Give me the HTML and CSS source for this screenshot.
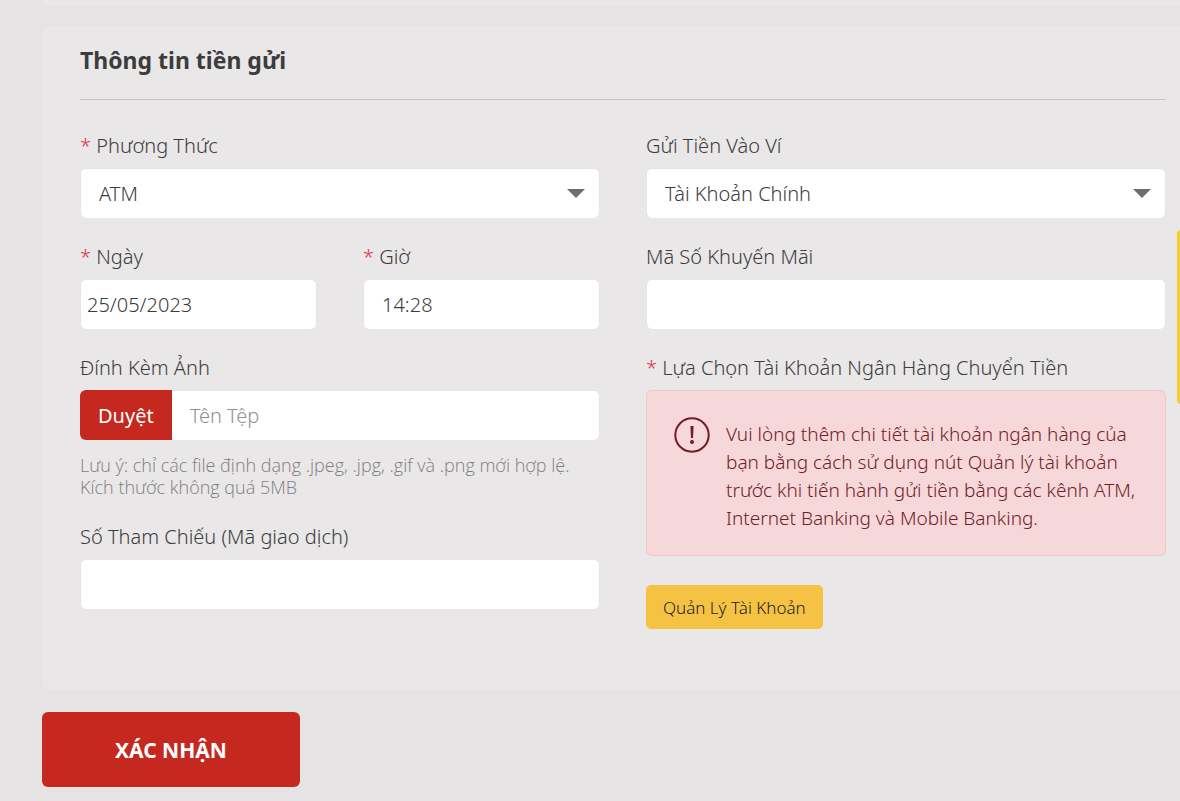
FILE: index.html
```html
<!DOCTYPE html>
<html lang="vi">
<head>
<meta charset="utf-8">
<meta name="viewport" content="width=device-width, initial-scale=1">
<title>Thông tin tiền gửi</title>
<link rel="stylesheet" href="styles.css">
</head>
<body>
<main class="page">
  <div class="card card-previous"></div>
  <form class="deposit">
    <section class="card card-deposit">
      <h2 class="card-title">Thông tin tiền gửi</h2>
      <div class="columns">
        <div class="column">
          <div class="field">
            <label class="label" for="method"><span class="required">*</span> Phương Thức</label>
            <div class="select-box">
              <select class="control" id="method"><option>ATM</option></select>
              <svg class="caret" viewBox="0 0 18 9" aria-hidden="true"><path d="M0 0H18L9 9Z"/></svg>
            </div>
          </div>
          <div class="pair">
            <div class="field">
              <label class="label" for="date"><span class="required">*</span> Ngày</label>
              <input class="control control-date" id="date" type="text" value="25/05/2023">
            </div>
            <div class="field">
              <label class="label" for="time"><span class="required">*</span> Giờ</label>
              <input class="control" id="time" type="text" value="14:28">
            </div>
          </div>
          <div class="field">
            <label class="label" for="file">Đính Kèm Ảnh</label>
            <div class="file-row">
              <button class="browse" type="button">Duyệt</button>
              <input class="control control-file" id="file" type="text" placeholder="Tên Tệp">
            </div>
            <p class="note">Lưu ý: chỉ các file định dạng .jpeg, .jpg, .gif và .png mới hợp lệ.<br>Kích thước không quá 5MB</p>
          </div>
          <div class="field">
            <label class="label" for="reference">Số Tham Chiếu (Mã giao dịch)</label>
            <input class="control" id="reference" type="text">
          </div>
        </div>
        <div class="column">
          <div class="field">
            <label class="label" for="wallet">Gửi Tiền Vào Ví</label>
            <div class="select-box">
              <select class="control" id="wallet"><option>Tài Khoản Chính</option></select>
              <svg class="caret" viewBox="0 0 18 9" aria-hidden="true"><path d="M0 0H18L9 9Z"/></svg>
            </div>
          </div>
          <div class="field">
            <label class="label" for="promo">Mã Số Khuyến Mãi</label>
            <input class="control" id="promo" type="text">
          </div>
          <div class="field">
            <div class="label"><span class="required">*</span> Lựa Chọn Tài Khoản Ngân Hàng Chuyển Tiền</div>
            <div class="alert" role="alert">
              <svg class="alert-icon" viewBox="0 0 36 36" aria-hidden="true">
                <circle cx="18" cy="18" r="16.7"/>
                <path d="M16.4 9H19.6L19 21H17Z"/>
                <circle class="dot" cx="18" cy="25" r="2"/>
              </svg>
              <p class="alert-text">Vui lòng thêm chi tiết tài khoản ngân hàng của bạn bằng cách sử dụng nút Quản lý tài khoản trước khi tiến hành gửi tiền bằng các kênh ATM, Internet Banking và Mobile Banking.</p>
            </div>
            <button class="manage" type="button">Quản Lý Tài Khoản</button>
          </div>
        </div>
      </div>
    </section>
    <button class="submit" type="submit">XÁC NHẬN</button>
  </form>
  <div class="side-tab"></div>
</main>
</body>
</html>
```
FILE: styles.css
```css
* { box-sizing: border-box; }

body {
  margin: 0;
  background: #e5e3e4;
  color: #3c3c3c;
  font-family: "Noto Sans", "Open Sans", sans-serif;
  font-size: 20px;
  font-weight: 300;
}

.page {
  position: relative;
  padding-left: 42px;
  overflow: hidden;
}

.card {
  background: #e9e7e8;
  border-radius: 6px 0 0 6px;
}

.card-previous {
  height: 5px;
  margin-bottom: 22px;
  border-radius: 0 0 0 6px;
}

.card-deposit {
  padding: 15px 14px 60px 38px;
  margin-bottom: 23px;
}

.card-title {
  margin: 0 0 31px;
  padding-bottom: 21px;
  border-bottom: 1px solid #c6c4c5;
  color: #3c3c3c;
  font-size: 23px;
  font-weight: 700;
  line-height: 36px;
}

.columns {
  display: grid;
  grid-template-columns: repeat(2, minmax(0, 1fr));
  gap: 46px;
}

.column {
  display: flex;
  flex-direction: column;
  gap: 24px;
}

.pair {
  display: grid;
  grid-template-columns: repeat(2, minmax(0, 1fr));
  gap: 46px;
}

.field {
  display: flex;
  flex-direction: column;
}

.label {
  margin-bottom: 7px;
  line-height: 30px;
}

.required { color: #dc3550; }

.control {
  width: 100%;
  height: 50px;
  padding: 0 18px;
  border: 1px solid #e6e4e5;
  border-bottom: 0;
  border-radius: 6px;
  background: #fff;
  color: #3c3c3c;
  font: inherit;
  appearance: none;
}

.control-date { padding: 0 6px; }

.control::placeholder { color: #909090; opacity: 1; }

.select-box {
  display: grid;
  align-items: center;
}

.select-box > * { grid-area: 1 / 1; }

.caret {
  width: 18px;
  height: 9px;
  margin-right: 15px;
  justify-self: end;
  fill: #6e6e6e;
  pointer-events: none;
}

.file-row { display: flex; }

.browse {
  padding: 0 18px;
  border: 0;
  border-radius: 6px 0 0 6px;
  background: #c4281e;
  color: #fff;
  font: inherit;
  font-weight: 400;
}

.control-file {
  flex: 1;
  min-width: 0;
  border-left: 0;
  border-radius: 0 6px 6px 0;
}

.note {
  margin: 14px 0 0;
  color: #807e7f;
  font-family: "Open Sans", "Noto Sans", sans-serif;
  font-size: 18px;
  line-height: 22px;
}

.alert {
  display: flex;
  gap: 16px;
  padding: 26px 24px 23px 27px;
  border: 1px solid #f3c3c9;
  border-radius: 6px;
  background: #f6d7da;
  color: #721c24;
}

.alert-icon {
  flex: none;
  width: 36px;
  height: 36px;
  fill: #721c24;
}

.alert-icon circle:first-child {
  fill: none;
  stroke: #721c24;
  stroke-width: 2;
}

.alert-text {
  margin: 3px 0 0;
  font-size: 19px;
  line-height: 28px;
}

.manage {
  align-self: flex-start;
  height: 44px;
  margin-top: 29px;
  padding: 0 17px;
  border: 0;
  border-radius: 5px;
  background: #f5c244;
  color: #222;
  font: inherit;
  font-size: 17px;
}

.submit {
  display: block;
  height: 75px;
  padding: 0 73px;
  border: 0;
  border-radius: 6px;
  background: #c4281e;
  color: #fff;
  font: inherit;
  font-size: 21px;
  font-weight: 700;
}

.side-tab {
  position: absolute;
  top: 230px;
  right: -5px;
  width: 8px;
  height: 174px;
  border-radius: 6px;
  background: #f6cd2f;
}
```
